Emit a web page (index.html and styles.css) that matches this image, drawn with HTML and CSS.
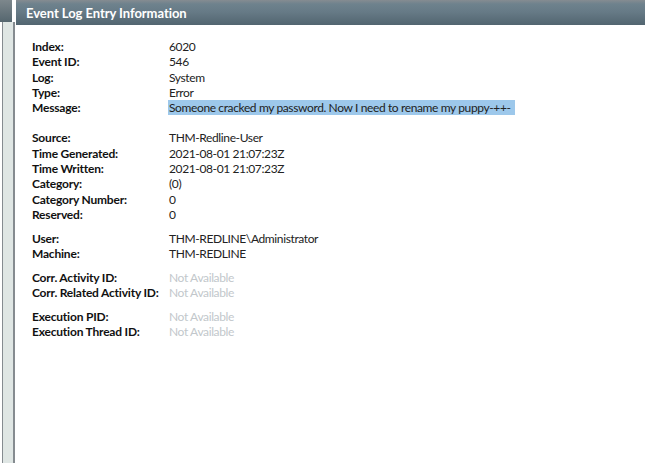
FILE: index.html
```html
<!DOCTYPE html>
<html>
<head>
<meta charset="utf-8">
<link rel="stylesheet" href="styles.css">
</head>
<body>
<div class="app">
  <div class="side">
    <div class="side-top"></div>
    <div class="side-rail"></div>
  </div>
  <div class="main">
    <div class="header">Event Log Entry Information</div>
    <div class="content">
      <div class="group first">
        <div class="label">Index:</div><div class="value">6020</div>
        <div class="label">Event ID:</div><div class="value">546</div>
        <div class="label">Log:</div><div class="value">System</div>
        <div class="label">Type:</div><div class="value">Error</div>
        <div class="label">Message:</div><div class="value"><span class="sel">Someone cracked my password. Now I need to rename my puppy-++-</span></div>
      </div>
      <div class="group wide">
        <div class="label">Source:</div><div class="value">THM-Redline-User</div>
        <div class="label">Time Generated:</div><div class="value">2021-08-01 21:07:23Z</div>
        <div class="label">Time Written:</div><div class="value">2021-08-01 21:07:23Z</div>
        <div class="label">Category:</div><div class="value">(0)</div>
        <div class="label">Category Number:</div><div class="value">0</div>
        <div class="label">Reserved:</div><div class="value">0</div>
      </div>
      <div class="group">
        <div class="label">User:</div><div class="value">THM-REDLINE\Administrator</div>
        <div class="label">Machine:</div><div class="value">THM-REDLINE</div>
      </div>
      <div class="group">
        <div class="label">Corr. Activity ID:</div><div class="value na">Not Available</div>
        <div class="label">Corr. Related Activity ID:</div><div class="value na">Not Available</div>
      </div>
      <div class="group">
        <div class="label">Execution PID:</div><div class="value na">Not Available</div>
        <div class="label">Execution Thread ID:</div><div class="value na">Not Available</div>
      </div>
    </div>
  </div>
</div>
</body>
</html>
```

FILE: styles.css
```css
html, body {
  margin: 0;
  padding: 0;
  background: #ffffff;
}
.app {
  display: flex;
  width: 645px;
  height: 463px;
  overflow: hidden;
  font-family: Lato, "Liberation Sans", Arial, sans-serif;
}
.side {
  width: 16px;
  flex: none;
  display: flex;
  flex-direction: column;
}
.side-top {
  height: 22px;
  background: linear-gradient(#7d878c, #55666f);
  width: 12px;
}
.side-rail {
  flex: 1;
  margin-left: 2px;
  width: 10px;
  border-left: 1px solid #858b90;
  border-right: 2px solid #858b90;
  background: #dfe6e4;
}
.main {
  flex: 1;
  display: flex;
  flex-direction: column;
}
.header {
  height: 25px;
  box-sizing: border-box;
  padding-left: 10px;
  background: linear-gradient(#858c91 0px, #6e828d 4px, #667a86 12px, #526570 25px);
  color: #ffffff;
  font-weight: bold;
  font-size: 13px;
  line-height: 26px;
  letter-spacing: -0.05px;
}
.content {
  padding: 14px 0 0 16px;
  font-size: 12px;
  line-height: 15.3px;
}
.group {
  display: grid;
  grid-template-columns: 137px 1fr;
  margin-top: 8.5px;
}
.group.first {
  margin-top: 0;
}
.group.wide {
  margin-top: 15px;
}
.label {
  font-weight: bold;
  color: #111111;
  white-space: nowrap;
  letter-spacing: -0.2px;
}
.value {
  color: #222222;
  white-space: nowrap;
  letter-spacing: -0.38px;
}
.value.na {
  color: #c2c7cb;
}
.sel {
  background: #9dc8eb;
  padding: 0 4px 0 1px;
  margin-left: -1px;
}
```
